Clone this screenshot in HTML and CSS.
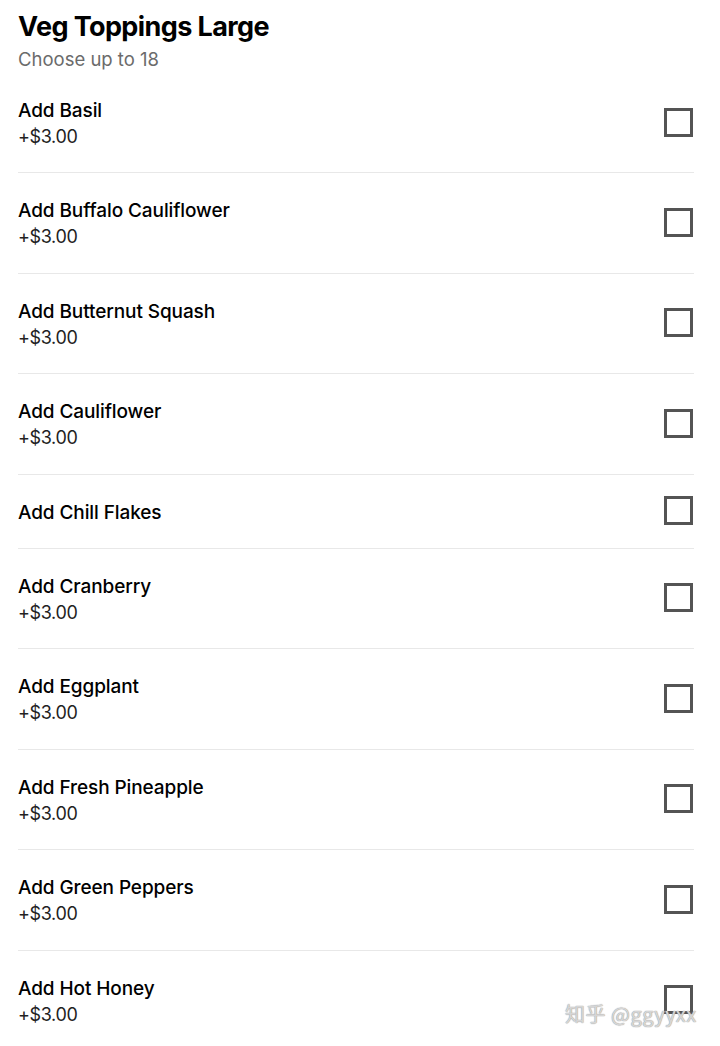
FILE: index.html
```html
<!DOCTYPE html>
<html>
<head>
<meta charset="utf-8">
<link rel="stylesheet" href="styles.css">
</head>
<body>
<div class="page">
  <header class="head">
    <h1 class="title">Veg Toppings Large</h1>
    <div class="sub">Choose up to 18</div>
  </header>
  <ul class="list">
    <li class="row"><div class="info"><div class="name">Add Basil</div><div class="price">+$3.00</div></div><span class="box"></span></li>
    <li class="row"><div class="info"><div class="name">Add Buffalo Cauliflower</div><div class="price">+$3.00</div></div><span class="box"></span></li>
    <li class="row"><div class="info"><div class="name">Add Butternut Squash</div><div class="price">+$3.00</div></div><span class="box"></span></li>
    <li class="row"><div class="info"><div class="name">Add Cauliflower</div><div class="price">+$3.00</div></div><span class="box"></span></li>
    <li class="row"><div class="info"><div class="name">Add Chill Flakes</div></div><span class="box"></span></li>
    <li class="row"><div class="info"><div class="name">Add Cranberry</div><div class="price">+$3.00</div></div><span class="box"></span></li>
    <li class="row"><div class="info"><div class="name">Add Eggplant</div><div class="price">+$3.00</div></div><span class="box"></span></li>
    <li class="row"><div class="info"><div class="name">Add Fresh Pineapple</div><div class="price">+$3.00</div></div><span class="box"></span></li>
    <li class="row"><div class="info"><div class="name">Add Green Peppers</div><div class="price">+$3.00</div></div><span class="box"></span></li>
    <li class="row"><div class="info"><div class="name">Add Hot Honey</div><div class="price">+$3.00</div></div><span class="box"></span></li>
  </ul>
</div>
<div class="watermark">知乎 @ggyyxx</div>
</body>
</html>
```
FILE: styles.css
```css
html, body {
  margin: 0;
  padding: 0;
  background: #ffffff;
}
body {
  font-family: Inter, "Liberation Sans", sans-serif;
  color: #111111;
  width: 720px;
  height: 1046px;
  overflow: hidden;
  position: relative;
}
.page {
  padding: 0 26px 0 18px;
}
.head {
  padding-top: 9px;
}
.title {
  margin: 0;
  font-size: 27px;
  line-height: 36px;
  font-weight: 700;
  letter-spacing: -0.6px;
  color: #000;
}
.sub {
  margin-top: 1px;
  font-size: 18.5px;
  line-height: 27px;
  color: #6b6b6b;
}
.list {
  list-style: none;
  margin: 0;
  padding: 0;
}
.row {
  display: flex;
  align-items: center;
  justify-content: space-between;
  padding: 25px 0 22.4px;
  border-bottom: 1px solid #e8e8e8;
}
.info {
  display: flex;
  flex-direction: column;
}
.name {
  font-size: 19px;
  line-height: 26px;
  font-weight: 500;
  color: #000;
  letter-spacing: -0.1px;
}
.price {
  font-size: 18px;
  line-height: 26px;
  color: #222;
  letter-spacing: -0.35px;
}
.box {
  width: 23px;
  height: 23px;
  border: 3px solid #545454;
  margin: -5px 1px -1px 0;
  flex: none;
}
.watermark {
  position: absolute;
  left: 565px;
  top: 1000px;
  font-family: "Noto Sans CJK SC", "Noto Sans", sans-serif;
  font-size: 20px;
  line-height: 28px;
  color: rgba(255, 255, 255, 0.6);
  text-shadow: 0 0 1px #9a9a9a, 0 0 1px #9a9a9a;
  letter-spacing: 0.5px;
}
```
